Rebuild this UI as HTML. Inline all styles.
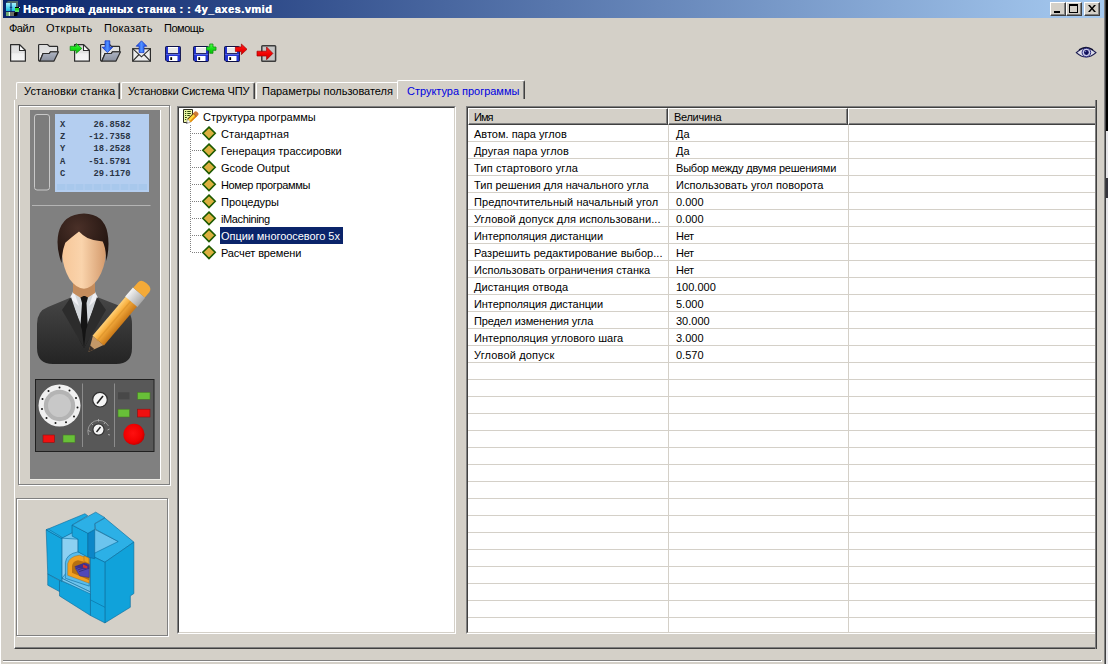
<!DOCTYPE html>
<html lang="ru">
<head>
<meta charset="utf-8">
<title>Настройка данных станка</title>
<style>
html,body{margin:0;padding:0}
body{width:1108px;height:664px;overflow:hidden;position:relative;background:#d4d0c8;
 font-family:"Liberation Sans",sans-serif;font-size:11px;color:#000;line-height:13px}
.a{position:absolute}
.t{position:absolute;white-space:nowrap;line-height:13px;height:13px}
/* title */
#title{left:3px;top:0;width:1101px;height:18px;background:linear-gradient(to right,#0a246a 0%,#a6caf0 100%)}
#ttext{left:23px;top:3px;color:#fff;font-weight:bold;font-size:11px;letter-spacing:0.5px;text-shadow:0.3px 0 0 #fff}
.wb{position:absolute;top:2px;width:16px;height:14px;background:#d4d0c8;box-sizing:border-box;
 border:1px solid;border-color:#fff #404040 #404040 #fff;box-shadow:inset -1px -1px 0 #808080}
/* tabs */
.tab{position:absolute;top:82px;height:17px;box-sizing:border-box}
/* etched frame */
.etch{position:absolute;box-sizing:border-box;border:1px solid #808080;box-shadow:inset 1px 1px 0 #fff,1px 1px 0 #fff}
.sunk{position:absolute;box-sizing:border-box;border:1px solid;border-color:#808080 #fff #fff #808080}
.sunk>i{position:absolute;left:0;top:0;right:0;bottom:0;border:1px solid;border-color:#404040 #d4d0c8 #d4d0c8 #404040;background:#fff}
/* tree */
.tr{position:absolute;left:221px;height:13px;line-height:13px;white-space:nowrap}
.dm{position:absolute;left:202px;width:14px;height:14px}
.hd{position:absolute;left:192px;width:10px;height:1px;background-image:linear-gradient(to right,#808080 50%,transparent 50%);background-size:2px 1px}
/* table */
.row{position:absolute;left:468px;width:627px;height:17px;box-sizing:border-box;border-bottom:1px solid #d4d0c8}
.row b{position:absolute;left:6px;top:3px;font-weight:normal;white-space:nowrap;line-height:13px}
.row u{position:absolute;left:208px;top:3px;text-decoration:none;white-space:nowrap;line-height:13px}
#n1{letter-spacing:0.12px}
#n2{letter-spacing:0.14px}
#n4{letter-spacing:0.08px}
#n5{letter-spacing:0.11px}
#n6{letter-spacing:-0.07px}
#n7{letter-spacing:0.06px}
#n8{letter-spacing:0.03px}
#n9{letter-spacing:0.09px}
#n10{letter-spacing:-0.07px}
#n11{letter-spacing:-0.12px}
#n12{letter-spacing:0.03px}
#n13{letter-spacing:0.16px}
#v2{letter-spacing:-0.21px}
#v3{letter-spacing:0.08px}
#v6{letter-spacing:-0.3px}
#v7{letter-spacing:-0.3px}
#v8{letter-spacing:-0.3px}
#tr0{letter-spacing:0.14px}
#tr3{letter-spacing:-0.36px}
#tr5{letter-spacing:-0.38px}
#tr6{letter-spacing:-0.05px}
#tr7{letter-spacing:-0.13px}
#tb1{letter-spacing:0.16px}
#tb2{letter-spacing:-0.15px}
#tb3{letter-spacing:-0.02px}
#tb4{letter-spacing:-0.02px}
#m1{letter-spacing:-0.5px}
#m2{letter-spacing:0.5px}
#m3{letter-spacing:0.23px}
#m4{letter-spacing:-0.46px}
#h1{letter-spacing:-1px}
#h2{letter-spacing:-0.3px}

</style>
</head>
<body>
<!-- window left edge -->
<div class="a" style="left:0;top:0;width:1px;height:664px;background:#fff"></div>
<!-- title bar -->
<div id="title" class="a"></div>
<div id="ttext" class="t">Настройка данных станка : : 4y_axes.vmid</div>
<svg class="a" style="left:5px;top:0" width="17" height="18" viewBox="5 0 17 18">
<defs><linearGradient id="cy" x1="0" y1="0" x2="0" y2="1"><stop offset="0" stop-color="#a8f4ff"/><stop offset="1" stop-color="#18b8e0"/></linearGradient></defs>
<path d="M6 3L8 1H18V9H16V3z" fill="#506868"/>
<rect x="6" y="3" width="4.600" height="8" fill="url(#cy)"/>
<rect x="11.400" y="3" width="4.600" height="8" fill="url(#cy)"/>
<rect x="10.600" y="3" width="0.800" height="8" fill="#105090"/>
<rect x="9.800" y="6.800" width="2.400" height="1.200" fill="#0c3c80"/>
<rect x="6" y="12" width="3.500" height="4" fill="#70a870"/>
<rect x="8.800" y="12" width="1.200" height="4" fill="#d8f8e8"/>
<rect x="10" y="12" width="5" height="4" fill="#686c68"/>
<path d="M14 12.500L17.500 12V15.500L15.500 16H14z" fill="#000"/>
<path d="M15 7H19.800V8.500H15z" fill="#000"/>
<path d="M15 8H19V11.500H15z" fill="#20d030"/>
<path d="M15 10.500H19V11.800H15z" fill="#70f080"/>
<rect x="19" y="7" width="1" height="1" fill="#e0e0ff"/>
</svg>

<div class="wb" style="left:1050px"><div class="a" style="left:3px;top:8px;width:6px;height:2px;background:#000"></div></div>
<div class="wb" style="left:1066px"><div class="a" style="left:2px;top:1px;width:9px;height:9px;box-sizing:border-box;border:1px solid #000;border-top-width:2px"></div></div>
<div class="wb" style="left:1084px"><svg class="a" style="left:3px;top:2px" width="8" height="7" viewBox="0 0 8 7"><path d="M0 0h2l2 2.5L6 0h2L5 3.5 8 7H6L4 4.5 2 7H0l3-3.500z" fill="#000"/></svg></div>
<!-- menu -->
<div class="t" id="m1" style="left:9px;top:22px">Файл</div>
<div class="t" id="m2" style="left:46px;top:22px">Открыть</div>
<div class="t" id="m3" style="left:104px;top:22px">Показать</div>
<div class="t" id="m4" style="left:164px;top:22px">Помощь</div>
<svg class="a" style="left:0;top:38px" width="300" height="30" viewBox="0 38 300 30">
<defs>
<linearGradient id="pg" x1="0" y1="0" x2="0" y2="1"><stop offset="0" stop-color="#dcdcdc"/><stop offset="0.500" stop-color="#e2e2e2"/><stop offset="0.550" stop-color="#f0f0f0"/><stop offset="1" stop-color="#f6f6f6"/></linearGradient>
<linearGradient id="ga" x1="0" y1="0" x2="0" y2="1"><stop offset="0" stop-color="#50ff50"/><stop offset="0.500" stop-color="#18e018"/><stop offset="1" stop-color="#08c008"/></linearGradient>
<linearGradient id="ba" x1="0" y1="0" x2="1" y2="0"><stop offset="0" stop-color="#1040e0"/><stop offset="0.500" stop-color="#5090ff"/><stop offset="1" stop-color="#1040e0"/></linearGradient>
<linearGradient id="ra" x1="0" y1="0" x2="0" y2="1"><stop offset="0" stop-color="#ff2020"/><stop offset="0.600" stop-color="#f00000"/><stop offset="1" stop-color="#c80000"/></linearGradient>
<linearGradient id="fl" x1="0" y1="0" x2="0" y2="1"><stop offset="0" stop-color="#f0f0f4"/><stop offset="0.180" stop-color="#a8aebc"/><stop offset="1" stop-color="#8a909e"/></linearGradient>
<g id="floppy">
 <path d="M0.600 1.200Q0.600 0.500 1.300 0.500H14.700Q15.400 0.500 15.400 1.200V14.800Q15.400 15.500 14.700 15.500H2L0.600 14.100z" fill="#2434d4" stroke="#0c1048" stroke-width="1"/>
 <rect x="3" y="1" width="10" height="6.500" fill="#e8e8e8"/>
 <rect x="3" y="1" width="10" height="1" fill="#fff"/>
 <rect x="2.800" y="7" width="10.400" height="0.800" fill="#101040"/>
 <rect x="3.800" y="14.600" width="9" height="0.700" fill="#101040"/>
 <rect x="4" y="10" width="8.500" height="5" fill="#fff"/>
 <rect x="5.300" y="11.200" width="1.800" height="2.800" fill="#000"/>
 <rect x="1.200" y="8" width="13.600" height="1" fill="#5868e0"/>
</g>
</defs>
<!-- 1 new -->
<path d="M10.600 44.600H19.500L25.400 50.500V61.200H10.600z" fill="url(#pg)" stroke="#2c2c2c" stroke-width="1.200" stroke-linejoin="round"/>
<path d="M19.500 44.600V50.500H25.400z" fill="#fff" stroke="#2c2c2c" stroke-width="1.100" stroke-linejoin="round"/>
<!-- 2 open -->
<path d="M38.600 45.200Q38.600 44.500 39.400 44.500H47.500L49.500 46.400H57.000Q57.600 46.400 57.600 47.200V51.800H50.500L49.300 53.500H43.000L39.900 61.100H39.400Q38.600 61.100 38.600 60.300z" fill="url(#pg)" stroke="#2c2c2c" stroke-width="1.200" stroke-linejoin="round"/>
<path d="M43.000 53.500H49.300L50.500 51.800H58.500L54.000 61.100H39.900z" fill="url(#fl)" stroke="#2c2c2c" stroke-width="1.200" stroke-linejoin="round"/>
<!-- 3 import -->
<path d="M74.600 44.600H83.500L89.400 50.500V61.200H74.600z" fill="url(#pg)" stroke="#2c2c2c" stroke-width="1.200" stroke-linejoin="round"/>
<path d="M83.500 44.600V50.500H89.400z" fill="#fff" stroke="#2c2c2c" stroke-width="1.100" stroke-linejoin="round"/>
<path d="M70.200 46.300H76.200V43.500L81.800 48.400L76.200 53.300V50.500H70.200z" fill="url(#ga)" stroke="#109010" stroke-width="0.800" stroke-linejoin="round"/>
<!-- 4 folder down -->
<path d="M100.600 45.200Q100.600 44.500 101.400 44.500H109.500L111.500 46.400H119.000Q119.600 46.400 119.600 47.200V51.800H112.500L111.300 53.500H105.000L101.900 61.100H101.400Q100.600 61.100 100.600 60.300z" fill="url(#pg)" stroke="#2c2c2c" stroke-width="1.200" stroke-linejoin="round"/>
<path d="M105.000 53.500H111.300L112.500 51.800H120.500L116.000 61.100H101.900z" fill="url(#fl)" stroke="#2c2c2c" stroke-width="1.200" stroke-linejoin="round"/>
<path d="M105 40.800H109.800V47.200H112.700L107.400 52.600L102.100 47.200H105z" fill="url(#ba)" stroke="#1030c0" stroke-width="0.700" stroke-linejoin="round"/>
<!-- 5 envelope up -->
<rect x="132.700" y="48.700" width="17.700" height="12.500" fill="#ececec" stroke="#2c2c2c" stroke-width="1.200"/>
<path d="M132.700 48.700L141.500 56.800L150.400 48.700M132.700 61.200L139 54.500M150.400 61.200L144 54.500" fill="none" stroke="#2c2c2c" stroke-width="1.100"/>
<path d="M141.500 40.800L146.800 46.200H144V52.600H139.100V46.200H136.200z" fill="url(#ba)" stroke="#1030c0" stroke-width="0.700" stroke-linejoin="round"/>
<!-- 6 floppy -->
<use href="#floppy" x="165" y="46"/>
<!-- 7 floppy plus -->
<use href="#floppy" x="193" y="46"/>
<path d="M209.700 44H213V47H216V50.300H213V53.300H209.700V50.300H206.700V47H209.700z" fill="url(#ga)" stroke="#109010" stroke-width="0.800" stroke-linejoin="round"/>
<!-- 8 floppy arrow -->
<use href="#floppy" x="224" y="46"/>
<path d="M235.400 47H241.400V44L247 49.300L241.400 54.600V51.600H235.400z" fill="url(#ra)" stroke="#a00000" stroke-width="0.700" stroke-linejoin="round"/>
<!-- 9 exit -->
<rect x="261.800" y="45.800" width="13.800" height="15.400" fill="#c4c4c4" stroke="#3c3c3c" stroke-width="1.500" rx="0.800"/>
<path d="M257 51.200H266.600V47L272.900 53.400L266.600 59.700V56H257z" fill="url(#ra)" stroke="#a00000" stroke-width="0.700" stroke-linejoin="round"/>
</svg>
<!-- eye -->
<svg class="a" style="left:1074px;top:44px" width="24" height="18" viewBox="1074 44 24 18">
<path d="M1076.300 52.600Q1086 43.500 1096 52.600Q1086 61.500 1076.300 52.600z" fill="#dcdce8" stroke="#1a1a50" stroke-width="1.100"/>
<path d="M1079 49.800Q1086 44.800 1093 49.800" fill="none" stroke="#101030" stroke-width="1.300"/>
<circle cx="1086.400" cy="52.500" r="4.300" fill="#c8c8e8" stroke="#2a2a80" stroke-width="1"/>
<circle cx="1086.400" cy="52.500" r="2.400" fill="#10105a"/>
<circle cx="1085.600" cy="51.600" r="0.700" fill="#8080d0"/>
</svg>

<!-- tab page -->
<div class="a" style="left:14px;top:100px;width:1083px;height:549px;box-sizing:border-box;border:1px solid;border-color:transparent #404040 #404040 #fff;border-top:0;box-shadow:inset -1px -1px 0 #808080"></div>
<!-- tabs -->
<div class="tab" style="left:16px;width:104px;border:1px solid;border-color:#fff #404040 transparent #fff;border-bottom:0;box-shadow:inset -1px 0 0 #808080;border-radius:2px 2px 0 0"></div>
<div class="tab" style="left:121px;width:134px;border:1px solid;border-color:#fff #404040 transparent #fff;border-bottom:0;box-shadow:inset -1px 0 0 #808080;border-radius:2px 2px 0 0"></div>
<div class="tab" style="left:256px;width:142px;border:1px solid;border-color:#fff transparent transparent #fff;border-bottom:0;border-right:0;border-radius:2px 0 0 0"></div>
<div class="tab" style="left:397px;top:80px;width:128px;height:19px;background:#d4d0c8;border:1px solid;border-color:#fff #404040 transparent #fff;border-bottom:0;box-shadow:inset -1px 0 0 #808080;border-radius:2px 2px 0 0"></div>
<div class="t" id="tb1" style="left:24px;top:85px">Установки станка</div>
<div class="t" id="tb2" style="left:128px;top:85px">Установки Система ЧПУ</div>
<div class="t" id="tb3" style="left:262px;top:85px">Параметры пользователя</div>
<div class="t" id="tb4" style="left:407px;top:85px;color:#0000e0">Структура программы</div>

<!-- upper frame -->
<div class="etch" style="left:18px;top:105px;width:152px;height:380px"></div>
<div class="a" id="img1" style="left:30px;top:110px;width:130px;height:369px;background:#808080"></div>
<div class="a" style="left:160px;top:110px;width:1px;height:370px;background:#fff"></div>
<div class="a" style="left:30px;top:479px;width:130px;height:1px;background:#ecebe6"></div>
<svg class="a" style="left:30px;top:110px" width="130" height="369" viewBox="30 110 130 369">
<defs>
<linearGradient id="skin" x1="0" y1="0" x2="1" y2="0"><stop offset="0" stop-color="#f6c698"/><stop offset="0.450" stop-color="#fad4ac"/><stop offset="1" stop-color="#d49a6c"/></linearGradient>
<radialGradient id="hair" cx="0.400" cy="0.300" r="0.800"><stop offset="0" stop-color="#4a3028"/><stop offset="1" stop-color="#1c100c"/></radialGradient>
<linearGradient id="suit" x1="0" y1="0" x2="0" y2="1"><stop offset="0" stop-color="#484848"/><stop offset="0.500" stop-color="#363636"/><stop offset="1" stop-color="#242424"/></linearGradient>
<linearGradient id="pen" x1="0" y1="0" x2="0" y2="1"><stop offset="0" stop-color="#ffd078"/><stop offset="0.350" stop-color="#f8b040"/><stop offset="1" stop-color="#c87818"/></linearGradient>
<linearGradient id="fer" x1="0" y1="0" x2="0" y2="1"><stop offset="0" stop-color="#f4f4f4"/><stop offset="1" stop-color="#a8a8a8"/></linearGradient>
<radialGradient id="redb" cx="0.450" cy="0.450" r="0.600"><stop offset="0" stop-color="#ff1010"/><stop offset="0.700" stop-color="#f00000"/><stop offset="1" stop-color="#b80000"/></radialGradient>
</defs>
<!-- lcd -->
<rect x="34.500" y="114.500" width="15" height="75.500" rx="2.500" fill="#7c7c7c" stroke="#c8c8c8" stroke-width="1"/>
<rect x="55" y="114" width="94" height="78" fill="#b4cef0"/>
<rect x="57" y="184" width="90" height="6" fill="#a8c8ec"/>
<path d="M66 184v6M75 184v6M84 184v6M93 184v6M102 184v6M111 184v6M120 184v6M129 184v6M138 184v6" stroke="#b4cef0" stroke-width="1"/>
<g font-family="'Liberation Mono',monospace" font-weight="bold" font-size="8.800px" fill="#2a3444">
<text x="60" y="127">X</text><text x="130.500" y="127" text-anchor="end">26.8582</text>
<text x="60" y="139.200">Z</text><text x="130.500" y="139.200" text-anchor="end">-12.7358</text>
<text x="60" y="151.400">Y</text><text x="130.500" y="151.400" text-anchor="end">18.2528</text>
<text x="60" y="163.700">A</text><text x="130.500" y="163.700" text-anchor="end">-51.5791</text>
<text x="60" y="176">C</text><text x="130.500" y="176" text-anchor="end">29.1170</text>
</g>
<!-- separator -->
<rect x="32" y="205" width="118.500" height="1" fill="#b4b4b4"/>
<!-- person -->
<path d="M37 348V324Q37 311 48 307L72 297L84 293L97 297L120 306Q132 310 132 324V348Q132 364 116 364H53Q37 364 37 348z" fill="url(#suit)"/>
<path d="M70 298L73 291.500H95L98 298L86 327H82z" fill="#d4d8dc"/>
<path d="M70 298L79 306L74 291.500zM98 298L89 306L94 291.500z" fill="#f0f0f4"/>
<path d="M73 280H95V293L84 300L73 293z" fill="#c48c5c"/>
<path d="M80.500 297.500L83.500 296H85L88 297.500L86.500 303L88.500 340L84 348L79.500 340L82 303z" fill="#141414"/>
<path d="M71 297L82 330L84 348L62 310zM97 297L86 330L84 348L106 310z" fill="#2c2c2c"/>
<path d="M62 252Q61.500 231 84 230.500Q106 231 105.800 252Q105.500 267 98 279Q91 288.700 84 288.700Q76.500 288.700 69.500 279Q62.500 267 62 252z" fill="url(#skin)"/>
<path d="M61.500 263Q55.500 246 58.500 233Q63 214 84 213.500Q104 214 107.500 233Q110 246 106.300 261Q106 248 102.700 241.500Q94 241 87.500 238Q82 235 79 231.600Q72 237 65.300 242.700Q62 251 61.500 263z" fill="url(#hair)"/>
<!-- pencil -->
<g transform="translate(88.500 352) rotate(-49.600)">
<path d="M0 0L15 -7V7z" fill="#c49868"/>
<path d="M0 0L6 -2.800V2.800z" fill="#3c3028"/>
<rect x="15" y="-7.500" width="53" height="15" fill="url(#pen)"/>
<rect x="14" y="-1.500" width="54" height="1.500" fill="#d89028" opacity="0.600"/>
<rect x="66" y="-8" width="12" height="16" fill="url(#fer)"/>
<path d="M78 -7.500H85Q90 -7.500 90 0Q90 7.500 85 7.500H78z" fill="#f4aa38"/>
</g>
<!-- control panel -->
<rect x="35.500" y="379.500" width="118.500" height="72" fill="#585858" stroke="#202020" stroke-width="1"/>
<path d="M82.500 383.500V447M114.500 383.500V447" stroke="#8c8c8c" stroke-width="1"/>
<circle cx="59.500" cy="405.500" r="21" fill="#f0f0f0"/>
<circle cx="59.500" cy="405.500" r="15.700" fill="#b4b4b4"/>
<circle cx="59.500" cy="405.500" r="11.500" fill="#c8c8c8"/>
<g fill="#181818">
<circle cx="59.500" cy="387.500" r="1"/><circle cx="69.500" cy="390.500" r="1"/><circle cx="76" cy="398" r="1"/><circle cx="77.500" cy="407.500" r="1"/><circle cx="74" cy="416.500" r="1"/><circle cx="66" cy="422.300" r="1"/><circle cx="55.500" cy="423" r="1"/><circle cx="46.500" cy="418" r="1"/><circle cx="42" cy="409" r="1"/><circle cx="42.500" cy="399" r="1"/><circle cx="48.500" cy="391" r="1"/>
</g>
<rect x="43" y="435" width="11.500" height="7.500" fill="#f01010" stroke="#901010" stroke-width="0.600"/>
<rect x="63" y="435" width="12" height="7.500" fill="#68c038" stroke="#487828" stroke-width="0.600"/>
<circle cx="100" cy="399.700" r="7.300" fill="#f4f4f4" stroke="#303030" stroke-width="1.200"/>
<path d="M97 403.500L103 396" stroke="#202020" stroke-width="1.600"/>
<path d="M88.500 435A11 11 0 0 1 108.500 426" fill="none" stroke="#989898" stroke-width="1"/>
<path d="M88 430.500L90.500 431.500M91 423L93 425M98.500 419V421.500M105.500 422L104 424M109.500 429L107.500 430M110 435L108 434.500" stroke="#a8a8a8" stroke-width="1"/>
<circle cx="98.500" cy="429.600" r="5.600" fill="#f4f4f4" stroke="#303030" stroke-width="1.200"/>
<path d="M96.500 432L100.500 427" stroke="#202020" stroke-width="1.400"/>
<rect x="118" y="392.300" width="11.500" height="7" fill="#484848"/>
<rect x="137.500" y="392.300" width="12.500" height="7" fill="#68c038" stroke="#487828" stroke-width="0.600"/>
<rect x="118" y="409.200" width="11.500" height="7.800" fill="#68c038" stroke="#487828" stroke-width="0.600"/>
<rect x="137.500" y="409.200" width="12.500" height="7.800" fill="#f01010" stroke="#901010" stroke-width="0.600"/>
<circle cx="134" cy="434.400" r="10.600" fill="url(#redb)"/>
</svg>
<!-- lower frame -->
<div class="etch" style="left:16px;top:498px;width:152px;height:138px"></div>
<svg class="a" style="left:36px;top:500px" width="110" height="130" viewBox="0 0 562 664">
<g stroke="#08689a" stroke-width="3" stroke-linejoin="round">
<path d="M52 152L250 70L264 80L185 128V168L132 197z" fill="#1caae2"/>
<!-- interior back -->
<path d="M132 195L185 168L300 150L420 212L352 318L278 285V470L132 400z" fill="#6cc4ee"/>
<path d="M132 195L215 200V300L132 400z" fill="#8cd0f2"/>
<!-- top of right wall -->
<path d="M300 122L352 92L500 215L352 318L278 282L420 212L305 150z" fill="#2cb0e6"/>
<!-- right side -->
<path d="M352 318L500 215V478L482 490V548L352 628z" fill="#10a2da"/>
<!-- right door front -->
<path d="M278 282L352 318V628L278 590z" fill="#14a6de"/>
<path d="M278 510L352 548" fill="none"/>
<!-- base center front -->
<path d="M120 410L278 472V590L120 490z" fill="#12a4dc"/>
<path d="M132 400L278 470V480L132 412z" fill="#7cccf0"/>
<!-- left door -->
<path d="M52 152L132 197V415L60 378z" fill="#14a6de"/>
<path d="M52 152L62 148L132 190V197z" fill="#30b4e8"/>
<path d="M60 378V435L120 468V412z" fill="#12a4dc"/>
<!-- arch -->
<path d="M150 400V320Q155 275 215 265L272 290V440z" fill="#58bcec"/>
<path d="M162 385V325Q170 288 222 282L272 300V425z" fill="#f0a020" stroke="#a06010" stroke-width="2"/>
<path d="M184 372V336Q188 312 214 308L272 322V410z" fill="#b87010" stroke="none"/>
<path d="M199 346L250 322L272 328V396L224 388z" fill="#5048b8" stroke="#282870" stroke-width="2"/>
<path d="M205 350L262 330M212 358L270 338M220 366L272 348" stroke="#20205c" stroke-width="3" fill="none"/>
<path d="M195 340L245 322L272 334V350L235 352z" fill="#403088" stroke="none"/>
<path d="M240 330L262 338V350L240 345z" fill="#d03030" stroke="none"/>
<!-- column -->
<path d="M185 128L265 170V292L215 265V200L185 185z" fill="#14a6de"/>
<path d="M265 170L300 150V300L265 292z" fill="#0c86c8"/>
<path d="M185 128L305 62L352 90L300 120V150L265 170z" fill="#2cb0e6"/>
<path d="M245 285L270 296V325L245 312z" fill="#e8a020" stroke="#a06010" stroke-width="2"/>
</g>
</svg>

<div class="sunk" style="left:177px;top:106px;width:279px;height:528px"><i></i></div>
<svg class="a" style="left:182px;top:108px" width="18" height="17" viewBox="182 108 18 17">
<path d="M183.500 109.500H192.500V115L186.500 122.500H183.500z" fill="#ecf6a4"/>
<path d="M186.800 122.500H183.500V109.500H192.500V115" fill="none" stroke="#2c2c20" stroke-width="1"/>
<path d="M185 111.500h1.200M187.300 111.500h3.500M185 113.500h1.200M187.300 113.500h3.500M185 115.500h1.200M187.300 115.500h2.500M185 117.500h1.800M185 119.500h1.200" stroke="#284808" stroke-width="1.100" fill="none"/>
<g transform="translate(186.300 123.400) rotate(-44.500)">
<path d="M0 0L4 -2.200V2.200z" fill="#fff" stroke="#70686a" stroke-width="0.500"/>
<path d="M0 0L1.300 -0.800V0.800z" fill="#181818"/>
<rect x="4" y="-2.300" width="8" height="4.600" fill="#ffd838"/>
<rect x="4" y="-2.500" width="8" height="0.900" fill="#4a2c10"/>
<rect x="4" y="0.800" width="8" height="1.600" fill="#e08810"/>
<path d="M12 -2.500H14.500Q15.800 -2.500 15.800 0Q15.800 2.400 14.500 2.400H12z" fill="#d07c38"/>
<rect x="11.500" y="-2.500" width="0.900" height="4.900" fill="#b06020"/>
</g>
</svg>
<div class="t" id="trroot" style="left:203px;top:111px">Структура программы</div>
<div class="a" style="left:190px;top:125px;width:1px;height:128px;background-image:linear-gradient(to bottom,#808080 50%,transparent 50%);background-size:1px 2px"></div>
<div class="hd" style="top:133px"></div>
<svg class="dm" style="top:126px;overflow:visible" viewBox="0 0 14 14"><path d="M7 1.100L13.200 7.300 7 13.500 0.800 7.300z" fill="#dcb040" stroke="#1c5a00" stroke-width="1.600"/></svg>
<div class="tr" id="tr0" style="top:128px">Стандартная</div>
<div class="hd" style="top:150px"></div>
<svg class="dm" style="top:143px;overflow:visible" viewBox="0 0 14 14"><path d="M7 1.100L13.200 7.300 7 13.500 0.800 7.300z" fill="#dcb040" stroke="#1c5a00" stroke-width="1.600"/></svg>
<div class="tr" id="tr1" style="top:145px">Генерация трассировки</div>
<div class="hd" style="top:167px"></div>
<svg class="dm" style="top:160px;overflow:visible" viewBox="0 0 14 14"><path d="M7 1.100L13.200 7.300 7 13.500 0.800 7.300z" fill="#dcb040" stroke="#1c5a00" stroke-width="1.600"/></svg>
<div class="tr" id="tr2" style="top:162px">Gcode Output</div>
<div class="hd" style="top:184px"></div>
<svg class="dm" style="top:177px;overflow:visible" viewBox="0 0 14 14"><path d="M7 1.100L13.200 7.300 7 13.500 0.800 7.300z" fill="#dcb040" stroke="#1c5a00" stroke-width="1.600"/></svg>
<div class="tr" id="tr3" style="top:179px">Номер программы</div>
<div class="hd" style="top:201px"></div>
<svg class="dm" style="top:194px;overflow:visible" viewBox="0 0 14 14"><path d="M7 1.100L13.200 7.300 7 13.500 0.800 7.300z" fill="#dcb040" stroke="#1c5a00" stroke-width="1.600"/></svg>
<div class="tr" id="tr4" style="top:196px">Процедуры</div>
<div class="hd" style="top:218px"></div>
<svg class="dm" style="top:211px;overflow:visible" viewBox="0 0 14 14"><path d="M7 1.100L13.200 7.300 7 13.500 0.800 7.300z" fill="#dcb040" stroke="#1c5a00" stroke-width="1.600"/></svg>
<div class="tr" id="tr5" style="top:213px">iMachining</div>
<div class="hd" style="top:235px"></div>
<svg class="dm" style="top:228px;overflow:visible" viewBox="0 0 14 14"><path d="M7 1.100L13.200 7.300 7 13.500 0.800 7.300z" fill="#dcb040" stroke="#1c5a00" stroke-width="1.600"/></svg>
<div class="a" style="left:220px;top:227px;width:123px;height:17px;background:#0a246a"></div>
<div class="tr" id="tr6" style="top:230px;color:#fff">Опции многоосевого 5x</div>
<div class="hd" style="top:252px"></div>
<svg class="dm" style="top:245px;overflow:visible" viewBox="0 0 14 14"><path d="M7 1.100L13.200 7.300 7 13.500 0.800 7.300z" fill="#dcb040" stroke="#1c5a00" stroke-width="1.600"/></svg>
<div class="tr" id="tr7" style="top:247px">Расчет времени</div>

<div class="sunk" style="left:466px;top:106px;width:631px;height:528px"><i></i></div>
<div class="a" style="left:468px;top:108px;width:200px;height:17px;box-sizing:border-box;background:#d4d0c8;border:1px solid;border-color:#fff #404040 #404040 #fff;box-shadow:inset -1px -1px 0 #808080"></div><div class="t" id="h1" style="left:474px;top:111px">Имя</div>
<div class="a" style="left:668px;top:108px;width:180px;height:17px;box-sizing:border-box;background:#d4d0c8;border:1px solid;border-color:#fff #404040 #404040 #fff;box-shadow:inset -1px -1px 0 #808080"></div><div class="t" id="h2" style="left:674px;top:111px">Величина</div>
<div class="a" style="left:848px;top:108px;width:251px;height:17px;box-sizing:border-box;background:#d4d0c8;border:1px solid;border-color:#fff #404040 #404040 #fff;box-shadow:inset -1px -1px 0 #808080"></div>
<div class="row" style="top:125px"><b id="n0">Автом. пара углов</b><u id="v0">Да</u></div>
<div class="row" style="top:142px"><b id="n1">Другая пара углов</b><u id="v1">Да</u></div>
<div class="row" style="top:159px"><b id="n2">Тип стартового угла</b><u id="v2">Выбор между двумя решениями</u></div>
<div class="row" style="top:176px"><b id="n3">Тип решения для начального угла</b><u id="v3">Использовать угол поворота</u></div>
<div class="row" style="top:193px"><b id="n4">Предпочтительный начальный угол</b><u id="v4">0.000</u></div>
<div class="row" style="top:210px"><b id="n5">Угловой допуск для использовани...</b><u id="v5">0.000</u></div>
<div class="row" style="top:227px"><b id="n6">Интерполяция дистанции</b><u id="v6">Нет</u></div>
<div class="row" style="top:244px"><b id="n7">Разрешить редактирование выбор...</b><u id="v7">Нет</u></div>
<div class="row" style="top:261px"><b id="n8">Использовать ограничения станка</b><u id="v8">Нет</u></div>
<div class="row" style="top:278px"><b id="n9">Дистанция отвода</b><u id="v9">100.000</u></div>
<div class="row" style="top:295px"><b id="n10">Интерполяция дистанции</b><u id="v10">5.000</u></div>
<div class="row" style="top:312px"><b id="n11">Предел изменения угла</b><u id="v11">30.000</u></div>
<div class="row" style="top:329px"><b id="n12">Интерполяция углового шага</b><u id="v12">3.000</u></div>
<div class="row" style="top:346px"><b id="n13">Угловой допуск</b><u id="v13">0.570</u></div>
<div class="row" style="top:363px"><b id="n14"></b><u id="v14"></u></div>
<div class="row" style="top:380px"><b id="n15"></b><u id="v15"></u></div>
<div class="row" style="top:397px"><b id="n16"></b><u id="v16"></u></div>
<div class="row" style="top:414px"><b id="n17"></b><u id="v17"></u></div>
<div class="row" style="top:431px"><b id="n18"></b><u id="v18"></u></div>
<div class="row" style="top:448px"><b id="n19"></b><u id="v19"></u></div>
<div class="row" style="top:465px"><b id="n20"></b><u id="v20"></u></div>
<div class="row" style="top:482px"><b id="n21"></b><u id="v21"></u></div>
<div class="row" style="top:499px"><b id="n22"></b><u id="v22"></u></div>
<div class="row" style="top:516px"><b id="n23"></b><u id="v23"></u></div>
<div class="row" style="top:533px"><b id="n24"></b><u id="v24"></u></div>
<div class="row" style="top:550px"><b id="n25"></b><u id="v25"></u></div>
<div class="row" style="top:567px"><b id="n26"></b><u id="v26"></u></div>
<div class="row" style="top:584px"><b id="n27"></b><u id="v27"></u></div>
<div class="row" style="top:601px"><b id="n28"></b><u id="v28"></u></div>
<div class="a" style="left:668px;top:125px;width:1px;height:507px;background:#d4d0c8"></div>
<div class="a" style="left:848px;top:125px;width:1px;height:507px;background:#d4d0c8"></div>

<!-- tabpage right -->
<div class="a" style="left:1095px;top:100px;width:1px;height:549px;background:#808080"></div>
<div class="a" style="left:1096px;top:100px;width:1px;height:549px;background:#404040"></div>
<div class="a" style="left:1097px;top:100px;width:7px;height:549px;background:#d4d0c8"></div>
<!-- status bar line -->
<div class="a" style="left:3px;top:660px;width:1098px;height:1px;background:#808080"></div>
<div class="a" style="left:3px;top:661px;width:1099px;height:1px;background:#fff"></div>
<div class="a" style="left:1101px;top:660px;width:1px;height:2px;background:#fff"></div>
<!-- right window edge -->
<div class="a" style="left:1104px;top:0;width:1px;height:664px;background:#808080"></div>
<div class="a" style="left:1105px;top:0;width:1px;height:664px;background:#404040"></div>
<div class="a" style="left:1106px;top:0;width:2px;height:664px;background:#e6e6ea"></div>
<div class="a" style="left:1106px;top:0;width:2px;height:131px;background:#000"></div>
<div class="a" style="left:1106px;top:178px;width:2px;height:20px;background:#34343c"></div>

</body>
</html>
